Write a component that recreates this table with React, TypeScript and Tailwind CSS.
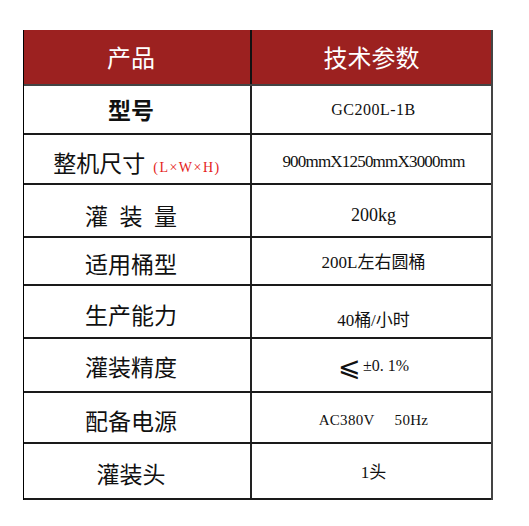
import React from "react";

const cjk = "font-['Noto_Sans_CJK_SC',sans-serif]";
const serif = "font-['Liberation_Serif','Noto_Sans_CJK_SC',serif]";

interface Row {
    label: React.ReactNode;
    value: React.ReactNode;
    h: string;
    shift?: string;
}

const rows: Row[] = [
    {
        label: <span className="font-semibold">型号</span>,
        value: <span className={`${serif} text-[16px] tracking-[0.5px]`}>GC200L-1B</span>,
        h: "h-[49px]",
    },
    {
        label: (
            <span className="flex items-baseline pl-3">
                整机尺寸
                <span className={`${serif} ml-2 text-[14px] tracking-[1.5px] text-[#e51c1c]`}>(L×W×H)</span>
            </span>
        ),
        value: <span className={`${serif} text-[17px] tracking-[-0.8px]`}>900mmX1250mmX3000mm</span>,
        h: "h-[50px]",
        shift: "pt-[6px]",
    },
    {
        label: <span className="whitespace-pre">灌{"\u2002"}装{"\u2002"}量</span>,
        value: <span className={`${serif} text-[18px]`}>200kg</span>,
        h: "h-[53px]",
        shift: "pt-[10px]",
    },
    {
        label: "适用桶型",
        value: <span className={`${serif} text-[17px]`}>200L左右圆桶</span>,
        h: "h-[48px]",
        shift: "pt-[4px]",
    },
    {
        label: "生产能力",
        value: <span className={`${serif} text-[17px] block pt-[12px]`}>40桶/小时</span>,
        h: "h-[53px]",
        shift: "pt-[6px]",
    },
    {
        label: "灌装精度",
        value: (
            <span className={`${serif} text-[16px] flex items-center whitespace-pre`}>
                <span className="font-['DejaVu_Sans',sans-serif] text-[27px] mr-[2px] leading-none font-light">⩽</span>±0. 1%
            </span>
        ),
        h: "h-[54px]",
        shift: "pt-[2px]",
    },
    {
        label: "配备电源",
        value: <span className={`${serif} text-[15px] whitespace-pre tracking-[0.3px]`}>AC380V     50Hz</span>,
        h: "h-[51px]",
        shift: "pt-[6px]",
    },
    {
        label: "灌装头",
        value: <span className={`${serif} text-[17px]`}>1头</span>,
        h: "h-[56px]",
        shift: "pt-[4px]",
    },
];

export default function App() {
    return (
        <div className="w-[529px] h-[526px] bg-white pt-[30px] pl-[23px]">
            <div className="w-[470px] border-l-[1.5px] border-l-black border-r-2 border-r-[#444]">
                {/* header */}
                <div className={`flex h-[56px] bg-[#9c2120] border-b-2 border-b-[#444] text-white text-[24px] ${cjk}`}>
                    <div className="w-[228px] flex items-center justify-center pr-3 border-r-2 border-r-[#111]">产品</div>
                    <div className="flex-1 flex items-center justify-center">技术参数</div>
                </div>

                {rows.map((row, i) => (
                    <div key={i} className={`flex ${row.h} border-b-2 border-b-[#1a1a1a] text-[#111]`}>
                        <div className={`w-[228px] flex items-center justify-center pr-3 border-r-2 border-r-[#222] text-[23px] ${cjk} ${row.shift ?? ""}`}>
                            {row.label}
                        </div>
                        <div className={`flex-1 flex items-center justify-center pl-1 ${row.shift ?? ""}`}>
                            {row.value}
                        </div>
                    </div>
                ))}
            </div>
        </div>
    );
}
